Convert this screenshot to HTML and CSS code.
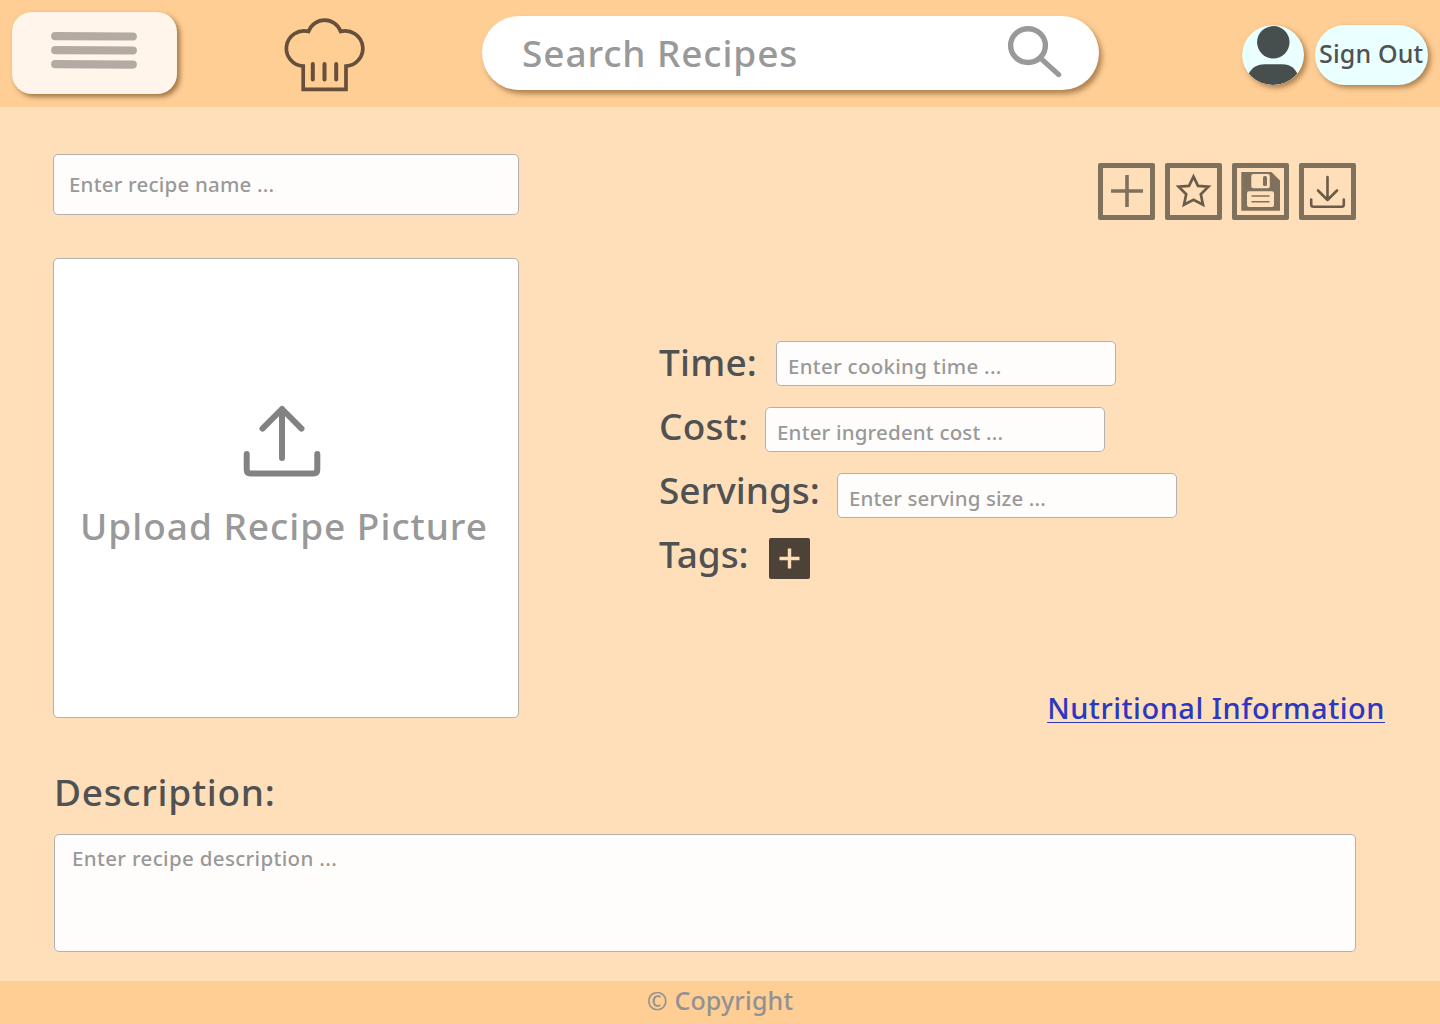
FILE: index.html
```html
<!DOCTYPE html>
<html lang="en">
<head>
<meta charset="utf-8">
<title>New Recipe</title>
<link rel="stylesheet" href="styles.css">
</head>
<body>
<header class="topbar">
  <button class="menu" aria-label="Menu">
    <svg width="86" height="38" viewBox="0 0 86 38" stroke="#b3aba3" stroke-width="8.2" stroke-linecap="round"><path d="M4.2 4.2L81.8 4.5M4.2 18.2L81.8 18.5M4.2 32.2L81.8 32.6"/></svg>
  </button>
  <svg class="hat" width="82" height="76" viewBox="284 16 82 76" fill="none" stroke="#664f3b" stroke-width="3.7">
    <path d="M303.2 66.2A17.7 17.7 0 1 1 308.6 31.4A17 17 0 0 1 340.6 31.4A17.7 17.7 0 1 1 346 66.2V89.4H303.2V64.3"/>
    <path d="M312.8 64V79.6M324.5 64V79.6M336.2 64V79.6" stroke-width="4" stroke-linecap="round"/>
  </svg>
  <div class="search">
    <span class="search-text">Search Recipes</span>
    <svg width="56" height="54" viewBox="1006 25 56 54" fill="none" stroke="#999" stroke-linecap="round"><ellipse cx="1028" cy="45.6" rx="17.4" ry="16.9" stroke-width="5.4"/><path d="M1041 58.6L1058.7 74.6" stroke-width="5.2"/></svg>
  </div>
  <svg class="avatar" width="62" height="60" viewBox="0 0 62 60">
    <clipPath id="face"><ellipse cx="31" cy="30" rx="31" ry="30"/></clipPath>
    <g clip-path="url(#face)"><rect width="62" height="60" fill="#eaffff"/><g fill="#464e4e"><circle cx="31.3" cy="17.3" r="16.2"/><path d="M5 60V52C9 43 14 39.3 23 39.3H40C49 39.3 53 43 57 52V60Z"/></g></g>
  </svg>
  <button class="signout"><span>Sign Out</span></button>
</header>

<main class="page">
  <div class="title-row">
    <div class="field name"><span>Enter recipe name ...</span></div>
    <div class="tools">
      <button class="tool" aria-label="Add"><svg viewBox="0 0 57 57" stroke="#80715c" stroke-width="3.6"><path d="M29 12V44M13 28H45"/></svg></button>
      <button class="tool" aria-label="Favourite"><svg viewBox="0 0 57 57" fill="none" stroke="#6a5c48" stroke-width="2.7"><path d="M28.5 13.6L33 22.9L43.4 23.7L35.8 31.2L38 41.7L28.5 36.7L19 41.7L21.2 31.2L13.6 23.7L24 22.9Z"/></svg></button>
      <button class="tool" aria-label="Save"><svg viewBox="0 0 57 57"><path d="M9.3 9H39.5L48 17.5V47.8H9.3Z" fill="#80715c"/><rect x="19.3" y="11" width="18.5" height="14.3" rx="2" fill="#ffdfb9"/><rect x="31" y="13" width="4" height="10" rx="1.5" fill="#80715c"/><rect x="15" y="28.3" width="27" height="15.7" rx="2" fill="#ffdfb9"/><path d="M19.5 33H37.5M19.5 38.8H37.5" stroke="#80715c" stroke-width="1.6"/></svg></button>
      <button class="tool" aria-label="Download"><svg viewBox="0 0 57 57" fill="none" stroke="#6a5c48" stroke-width="2.6" stroke-linecap="round" stroke-linejoin="round"><path d="M28.5 14V37M19 27.5L28.5 37L38 27.5M12.2 36.5V41.5Q12.2 43.7 14.4 43.7H42.6Q44.8 43.7 44.8 41.5V36.5"/></svg></button>
    </div>
  </div>

  <div class="overview">
    <div class="upload">
      <svg width="78" height="72" viewBox="243.5 405 78 72" fill="none" stroke="#828282" stroke-width="6" stroke-linecap="round" stroke-linejoin="round"><path d="M282.5 409V458M263 428.6L282.5 409L302 428.6M247.2 454V469.5Q247.2 473.5 251.2 473.5H313.8Q317.8 473.5 317.8 469.5V454"/></svg>
      <span>Upload Recipe Picture</span>
    </div>
    <div class="details">
      <div class="facts">
        <div class="fact"><span class="label time">Time:</span><div class="field"><span class="t1">Enter cooking time ...</span></div></div>
        <div class="fact"><span class="label cost">Cost:</span><div class="field"><span class="t2">Enter ingredent cost ...</span></div></div>
        <div class="fact"><span class="label serv">Servings:</span><div class="field"><span class="t3">Enter serving size ...</span></div></div>
        <div class="fact"><span class="label tags">Tags:</span><button class="add-tag" aria-label="Add tag"><svg width="41" height="41" viewBox="0 0 41 41" stroke="#ffdfb9" stroke-width="3.4"><path d="M20.5 10.5V30.5M10.5 20.5H30.5"/></svg></button></div>
      </div>
      <a class="nutrition" href="#">Nutritional Information</a>
    </div>
  </div>

  <h2 class="heading">Description:</h2>
  <div class="field description"><span>Enter recipe description ...</span></div>
</main>

<footer class="footer"><span>© Copyright</span></footer>
</body>
</html>
```
FILE: styles.css
```css
* { box-sizing: border-box; }

body {
  margin: 0;
  width: 1440px;
  height: 1024px;
  display: flex;
  flex-direction: column;
  background: #ffdfb9;
  color: #4f5152;
  font-family: "Noto Sans", "Open Sans", sans-serif;
  font-weight: 500;
}

button {
  padding: 0;
  border: 0;
  font: inherit;
  color: inherit;
}

svg { display: block; flex: none; }

span { white-space: nowrap; }

/* Top bar */
.topbar {
  height: 107px;
  flex: none;
  display: flex;
  align-items: flex-start;
  padding-left: 12px;
  background: #ffce94;
}

.menu {
  width: 165px;
  height: 82px;
  margin-top: 12px;
  padding: 20px 0 0 39px;
  border-radius: 20px;
  background: #fff5eb;
  box-shadow: 3px 3px 5px rgba(100, 60, 20, 0.6);
  display: flex;
}

.hat { margin: 16px 0 0 107px; }

.search {
  width: 617px;
  height: 74px;
  margin: 16px 0 0 116px;
  padding: 9px 37px 0 40px;
  display: flex;
  justify-content: space-between;
  border-radius: 37px;
  background: #fff;
  color: #999;
  box-shadow: 3px 4px 5px rgba(100, 60, 20, 0.5);
}

.search-text {
  font-size: 37px;
  line-height: 56px;
  letter-spacing: 0.9px;
}

.avatar {
  margin: 25px 0 0 143px;
  border-radius: 50%;
  box-shadow: 3px 3px 5px rgba(100, 60, 20, 0.5);
}

.signout {
  width: 113px;
  height: 60px;
  margin: 25px 0 0 11px;
  border-radius: 30px;
  background: #eaffff;
  box-shadow: 3px 3px 5px rgba(100, 60, 20, 0.5);
  font-size: 25px;
  line-height: 56px;
  letter-spacing: 0.15px;
  padding: 0 0 4px 4px;
  text-align: left;
}

/* Recipe form */
.page {
  flex: 1;
  padding: 47px 55px 0 53px;
}

.field {
  border: 1px solid #b3b1b0;
  border-radius: 5px;
  background: #fffdfb;
  color: #999;
  font-size: 20.5px;
}

.title-row {
  display: flex;
  align-items: flex-start;
  justify-content: space-between;
  padding-right: 29px;
}

.name {
  width: 466px;
  height: 61px;
  padding-left: 15px;
  line-height: 59px;
  letter-spacing: 0.2px;
}

.tools {
  display: flex;
  gap: 10px;
  margin-top: 9px;
}

.tool {
  width: 57px;
  height: 57px;
  border-radius: 2px;
  background: none;
  box-shadow: inset 0 0 0 5px #80715c;
}

.overview {
  display: flex;
  margin-top: 38px;
}

.upload {
  width: 466px;
  height: 460px;
  display: flex;
  flex-direction: column;
  align-items: center;
  padding-top: 146px;
  padding-right: 8px;
  border: 1px solid #b3b1b0;
  border-radius: 5px;
  background: #fff;
  color: #999;
  font-size: 37px;
  line-height: 50px;
  letter-spacing: 0.98px;
}

.upload svg { margin-bottom: 24px; }
.upload span { margin-left: 4px; }

.details {
  flex: 1;
  display: flex;
  flex-direction: column;
  justify-content: space-between;
  padding: 83px 0 0 140px;
}

.fact {
  height: 64px;
  display: flex;
  align-items: flex-start;
}

.label {
  font-size: 37px;
  line-height: 41px;
}

.fact .field {
  width: 340px;
  height: 45px;
  padding-left: 11px;
  line-height: 49px;
}

.time { width: 117px; letter-spacing: 0.2px; }
.cost { width: 106px; letter-spacing: 0.2px; }
.serv { width: 178px; letter-spacing: 0; }
.tags { width: 109px; letter-spacing: -0.1px; }

.t1 { letter-spacing: 0.28px; }
.t2 { letter-spacing: 0.18px; }
.t3 { letter-spacing: 0.1px; }

.fact:nth-child(2) .field { margin-top: 2px; }
.fact:nth-child(3) .field { margin-top: 4px; }

.add-tag {
  width: 41px;
  height: 41px;
  margin: 5px 0 0 0.5px;
  border-radius: 2px;
  background: #4d4237;
}

.nutrition {
  align-self: flex-end;
  height: 22px;
  color: #2c38bf;
  font-size: 29px;
  line-height: 24px;
  letter-spacing: 0.5px;
  white-space: nowrap;
  text-decoration: underline 1.4px;
  text-underline-offset: 2.5px;
  text-decoration-skip-ink: none;
}

.heading {
  margin: 49px 0 0 1px;
  font-size: 37px;
  font-weight: 500;
  line-height: 50px;
  letter-spacing: 0.7px;
}

.description {
  width: 1302px;
  height: 118px;
  margin: 17px 0 0 1px;
  padding: 7px 0 0 17px;
  line-height: 32px;
  letter-spacing: 0.34px;
}

.footer {
  height: 43px;
  flex: none;
  background: #ffce94;
  color: #929292;
  font-size: 25px;
  line-height: 39px;
  letter-spacing: 0.15px;
  text-align: center;
}
```
